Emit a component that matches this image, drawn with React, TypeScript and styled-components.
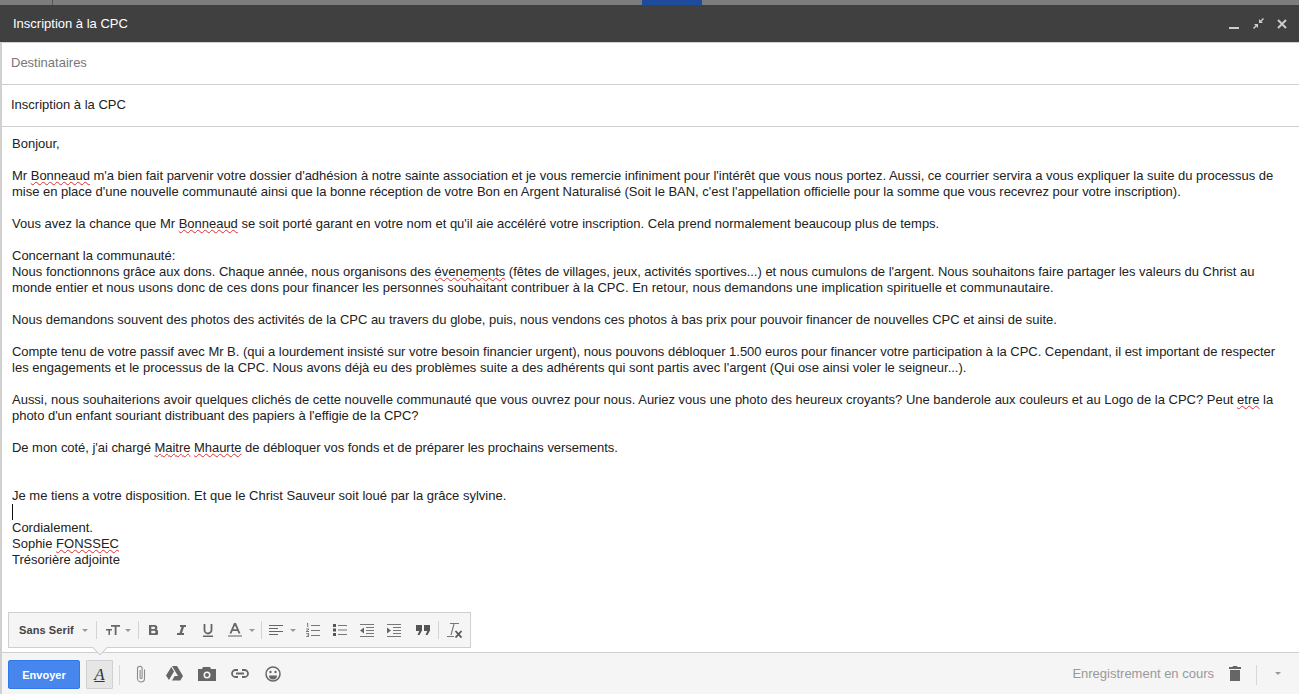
import React from 'react';
import styled, { createGlobalStyle } from 'styled-components';

const GlobalStyle = createGlobalStyle`
  html, body {
    margin: 0;
    padding: 0;
    background: #fff;
    overflow: hidden;
  }
  * {
    box-sizing: border-box;
  }
`;

const Page = styled.div`
  position: relative;
  width: 1299px;
  height: 694px;
  display: flex;
  flex-direction: column;
  overflow: hidden;
  font-family: 'Liberation Sans', Arial, sans-serif;
  color: #222;
`;

const BackdropStrip = styled.div`
  height: 5px;
  flex: none;
  display: flex;
  background: #7d7d7d;
`;

const BackdropTick = styled.div`
  width: 1px;
  margin-left: 52px;
  background: #555;
`;

const BackdropTab = styled.div`
  width: 60px;
  margin-left: 589px;
  background: #1f4b9c;
`;

const TitleBar = styled.div`
  height: 37px;
  flex: none;
  display: flex;
  align-items: center;
  padding: 0 5px 0 13px;
  background: #404040;
  color: #fff;
  font-size: 13px;
`;

const TitleText = styled.div`
  flex: 1;
`;

const WindowButton = styled.div`
  width: 24px;
  height: 16px;
  display: flex;
  align-items: center;
  justify-content: center;
`;

const Compose = styled.div`
  flex: 1;
  min-height: 0;
  display: flex;
  flex-direction: column;
  border-left: 2px solid #d0d0d0;
  border-top: 1px solid #d0d0d0;
`;

const FieldRow = styled.div<{ $muted?: boolean }>`
  height: 42px;
  flex: none;
  display: flex;
  align-items: center;
  padding: 0 0 2px 9px;
  border-bottom: 1px solid #cfcfcf;
  font-size: 13px;
  color: ${({ $muted }) => ($muted ? '#777' : '#222')};
`;

const MessageBody = styled.div`
  flex: 1;
  min-height: 0;
  padding: 9px 0 0 10px;
  font-size: 13px;
  line-height: 16px;
  color: #222;
`;

// $fit: small letter-spacing so the line ends where it does in the picture
const Line = styled.div<{ $fit?: number }>`
  height: 16px;
  white-space: nowrap;
  letter-spacing: ${({ $fit }) => $fit ?? 0}px;
`;

const Misspelt = styled.span`
  text-decoration: underline wavy #d83030 1px;
  text-underline-offset: 1px;
`;

const Caret = styled.div`
  width: 1px;
  height: 16px;
  background: #111;
`;

const FormatBar = styled.div`
  position: absolute;
  left: 8px;
  top: 612px;
  width: 463px;
  height: 36px;
  display: flex;
  align-items: center;
  padding-left: 10px;
  background: #f5f5f5;
  border: 1px solid #cfcfcf;
  z-index: 2;
`;

const FontLabel = styled.div`
  width: 55px;
  font-size: 11px;
  font-weight: 700;
  letter-spacing: 0.1px;
  color: #444;
  white-space: nowrap;
`;

const Slot = styled.div<{ $w: number; $start?: boolean }>`
  width: ${({ $w }) => $w}px;
  flex: none;
  height: 20px;
  display: flex;
  align-items: center;
  justify-content: ${({ $start }) => ($start ? 'flex-start' : 'center')};
`;

const BarSeparator = styled.div`
  width: 1px;
  height: 18px;
  flex: none;
  background: #d4d4d4;
`;

const BarArrow = styled.div`
  position: absolute;
  left: 92px;
  top: 647px;
  width: 15px;
  height: 8px;
  z-index: 3;
  overflow: hidden;

  &::after {
    content: '';
    position: absolute;
    left: 2px;
    top: -6px;
    width: 11px;
    height: 11px;
    background: #f5f5f5;
    border-right: 1px solid #cfcfcf;
    border-bottom: 1px solid #cfcfcf;
    transform: rotate(45deg);
  }
`;

const Footer = styled.div`
  height: 42px;
  flex: none;
  display: flex;
  align-items: center;
  padding: 0 0 0 6px;
  background: #f5f5f5;
  border-top: 1px solid #cfcfcf;
`;

const SendButton = styled.button`
  width: 72px;
  height: 29px;
  margin-top: 2px;
  padding: 0;
  border: 1px solid #3079ed;
  border-radius: 2px;
  background: #4787ed;
  color: #fff;
  font-family: inherit;
  font-size: 11px;
  font-weight: 700;
`;

const FormatToggle = styled.div`
  width: 27px;
  height: 29px;
  margin: 2px 0 0 6px;
  display: flex;
  align-items: center;
  justify-content: center;
  background: #e6e6e6;
  border: 1px solid #d0d0d0;
  border-radius: 1px;
  font-family: 'Liberation Serif', serif;
  font-style: italic;
  font-size: 17px;
  color: #333;
  text-decoration: underline;
`;

const FooterSeparator = styled.div<{ $ml: number; $mr?: number }>`
  width: 1px;
  height: 20px;
  flex: none;
  margin: 2px ${({ $mr }) => $mr ?? 0}px 0 ${({ $ml }) => $ml}px;
  background: #d8d8d8;
`;

const FooterIcon = styled.div<{ $w: number }>`
  width: ${({ $w }) => $w}px;
  height: 24px;
  flex: none;
  display: flex;
  align-items: center;
  justify-content: center;
`;

const SaveStatus = styled.div`
  margin-left: auto;
  font-size: 13px;
  color: #999;
  white-space: nowrap;
`;

const Chevron = () => (
  <svg width="6" height="3" viewBox="0 0 6 3">
    <path d="M0 0h6L3 3z" fill="#999" />
  </svg>
);

const App: React.FC = () => {
  return (
    <Page>
      <GlobalStyle />
      <BackdropStrip>
        <BackdropTick />
        <BackdropTab />
      </BackdropStrip>
      <TitleBar>
        <TitleText>Inscription à la CPC</TitleText>
        <WindowButton>
          <svg width="10" height="10" viewBox="0 0 10 10">
            <path d="M0 8h10v2H0z" fill="#ccc" />
          </svg>
        </WindowButton>
        <WindowButton>
          <svg width="11" height="11" viewBox="0 0 11 11">
            <path d="M6 5V1l1.500 1.500L10 0l1 1-2.500 2.500L10 5zM5 6v4L3.500 8.500 1 11l-1-1 2.500-2.500L1 6z" fill="#ccc" />
          </svg>
        </WindowButton>
        <WindowButton>
          <svg width="10" height="10" viewBox="0 0 10 10">
            <path d="M1 1l8 8M9 1l-8 8" stroke="#ccc" strokeWidth="2" />
          </svg>
        </WindowButton>
      </TitleBar>
      <Compose>
        <FieldRow $muted>Destinataires</FieldRow>
        <FieldRow>Inscription à la CPC</FieldRow>
        <MessageBody>
          <Line>Bonjour,</Line>
          <Line />
          <Line $fit={-0.013}>
            Mr <Misspelt>Bonneaud</Misspelt> m'a bien fait parvenir votre dossier d'adhésion à notre sainte association et je vous remercie infiniment pour l'intérêt que vous nous portez. Aussi, ce courrier servira a vous expliquer la suite du processus de
          </Line>
          <Line $fit={-0.02}>
            mise en place d'une nouvelle communauté ainsi que la bonne réception de votre Bon en Argent Naturalisé (Soit le BAN, c'est l'appellation officielle pour la somme que vous recevrez pour votre inscription).
          </Line>
          <Line />
          <Line $fit={-0.011}>
            Vous avez la chance que Mr <Misspelt>Bonneaud</Misspelt> se soit porté garant en votre nom et qu'il aie accéléré votre inscription. Cela prend normalement beaucoup plus de temps.
          </Line>
          <Line />
          <Line>Concernant la communauté:</Line>
          <Line $fit={-0.014}>
            Nous fonctionnons grâce aux dons. Chaque année, nous organisons des <Misspelt>évenements</Misspelt> (fêtes de villages, jeux, activités sportives...) et nous cumulons de l'argent. Nous souhaitons faire partager les valeurs du Christ au
          </Line>
          <Line $fit={0.022}>
            monde entier et nous usons donc de ces dons pour financer les personnes souhaitant contribuer à la CPC. En retour, nous demandons une implication spirituelle et communautaire.
          </Line>
          <Line />
          <Line $fit={-0.017}>
            Nous demandons souvent des photos des activités de la CPC au travers du globe, puis, nous vendons ces photos à bas prix pour pouvoir financer de nouvelles CPC et ainsi de suite.
          </Line>
          <Line />
          <Line $fit={-0.027}>
            Compte tenu de votre passif avec Mr B. (qui a lourdement insisté sur votre besoin financier urgent), nous pouvons débloquer 1.500 euros pour financer votre participation à la CPC. Cependant, il est important de respecter
          </Line>
          <Line $fit={0.006}>
            les engagements et le processus de la CPC. Nous avons déjà eu des problèmes suite a des adhérents qui sont partis avec l'argent (Qui ose ainsi voler le seigneur...).
          </Line>
          <Line />
          <Line $fit={-0.01}>
            Aussi, nous souhaiterions avoir quelques clichés de cette nouvelle communauté que vous ouvrez pour nous. Auriez vous une photo des heureux croyants? Une banderole aux couleurs et au Logo de la CPC? Peut <Misspelt>etre</Misspelt> la
          </Line>
          <Line $fit={-0.03}>
            photo d'un enfant souriant distribuant des papiers à l'effigie de la CPC?
          </Line>
          <Line />
          <Line $fit={-0.036}>
            De mon coté, j'ai chargé <Misspelt>Maitre</Misspelt> <Misspelt>Mhaurte</Misspelt> de débloquer vos fonds et de préparer les prochains versements.
          </Line>
          <Line />
          <Line />
          <Line>Je me tiens a votre disposition. Et que le Christ Sauveur soit loué par la grâce sylvine.</Line>
          <Caret />
          <Line>Cordialement.</Line>
          <Line>
            Sophie <Misspelt>FONSSEC</Misspelt>
          </Line>
          <Line>Trésorière adjointe</Line>
        </MessageBody>
        <Footer>
          <SendButton>Envoyer</SendButton>
          <FormatToggle>A</FormatToggle>
          <FooterSeparator $ml={6} />
          <FooterIcon $w={42}>
            <svg width="10" height="18" viewBox="0 0 10 18">
              <path d="M8.500 4.500v9a3.500 3.500 0 0 1-7 0V3.500a2.300 2.300 0 0 1 4.600 0v9a1 1 0 0 1-2 0V5" fill="none" stroke="#8a8a8a" strokeWidth="1.100" />
            </svg>
          </FooterIcon>
          <FooterIcon $w={24}>
            <svg width="17" height="15" viewBox="0 0 17 15">
              <path d="M6 0h5l6 10h-5zM5.300 1L8 5.500 3 14 0 9.500zM6 14.500l2.700-4.500H17l-2.700 4.500z" fill="#666" />
            </svg>
          </FooterIcon>
          <FooterIcon $w={42}>
            <svg width="18" height="14" viewBox="0 0 18 14">
              <path fillRule="evenodd" d="M0 2h4l1-2h7l1 2h5v12H0zM9 4.500a3.500 3.500 0 1 0 0 7 3.500 3.500 0 0 0 0-7zM9 6a2 2 0 1 1 0 4 2 2 0 0 1 0-4z" fill="#666" />
            </svg>
          </FooterIcon>
          <FooterIcon $w={24}>
            <svg width="18" height="9" viewBox="0 0 18 9">
              <path d="M7 1H4.500a3.500 3.500 0 0 0 0 7H7M11 1h2.500a3.500 3.500 0 0 1 0 7H11M5 4.500h8" fill="none" stroke="#666" strokeWidth="1.800" />
            </svg>
          </FooterIcon>
          <FooterIcon $w={42}>
            <svg width="16" height="16" viewBox="0 0 16 16">
              <circle cx="8" cy="8" r="7" fill="none" stroke="#666" strokeWidth="1.500" />
              <circle cx="5.500" cy="6" r="1.200" fill="#666" />
              <circle cx="10.500" cy="6" r="1.200" fill="#666" />
              <path d="M4 9.500h8a4 4 0 0 1-8 0z" fill="#666" />
            </svg>
          </FooterIcon>
          <SaveStatus>Enregistrement en cours</SaveStatus>
          <FooterIcon $w={42}>
            <svg width="12" height="15" viewBox="0 0 12 15">
              <path d="M4 0h4l.5 1H12v2H0V1h3.500zM1 4h10v11H1z" fill="#666" />
            </svg>
          </FooterIcon>
          <FooterSeparator $ml={0} />
          <FooterIcon $w={42}>
            <Chevron />
          </FooterIcon>
        </Footer>
      </Compose>
      <FormatBar>
        <FontLabel>Sans Serif</FontLabel>
        <Slot $w={22}><Chevron /></Slot>
        <BarSeparator />
        <Slot $w={28} $start>
          <svg width="23" height="10" viewBox="-9 0 23 10">
            <path d="M0 4h6v1.500H4V10H2.500V5.500H0zM5 0h9v1.700h-3.500V10H8.700V1.700H5z" fill="#666" />
          </svg>
        </Slot>
        <Slot $w={13} $start><Chevron /></Slot>
        <BarSeparator />
        <Slot $w={29}>
          <svg width="9" height="10" viewBox="0 0 9 10">
            <path fillRule="evenodd" d="M0 0h5.500a2.600 2.600 0 0 1 2 4.500A2.800 2.800 0 0 1 5.700 10H0zM2.300 1.800v2.200h2.700a1.100 1.100 0 0 0 0-2.200zM2.300 5.800v2.400h3a1.200 1.200 0 0 0 0-2.400z" fill="#666" />
          </svg>
        </Slot>
        <Slot $w={27}>
          <svg width="9" height="10" viewBox="0 0 9 10">
            <path d="M3 0h6v2H7L5 8h2v2H0V8h2.500l2-6H3z" fill="#666" />
          </svg>
        </Slot>
        <Slot $w={27}>
          <svg width="10" height="13" viewBox="0 0 10 13">
            <path d="M1.500 0v6a3.500 3.500 0 0 0 7 0V0" fill="none" stroke="#666" strokeWidth="1.800" />
            <path d="M0 11.500h10V13H0z" fill="#666" />
          </svg>
        </Slot>
        <Slot $w={27}>
          <svg width="14" height="14" viewBox="0 0 14 14">
            <path fillRule="evenodd" d="M6 0h2l4.500 10.500h-2L9.500 8h-5l-1 2.500h-2zM7 2.500L5.200 6.300h3.600z" fill="#666" />
            <path d="M0 12h14v2H0z" fill="#aaa" />
          </svg>
        </Slot>
        <Slot $w={12} $start><Chevron /></Slot>
        <BarSeparator />
        <Slot $w={28}>
          <svg width="14" height="11" viewBox="0 0 14 11">
            <path d="M0 .5h14M0 3.500h9M0 6.500h14M0 9.500h9" fill="none" stroke="#666" strokeWidth="1" />
          </svg>
        </Slot>
        <Slot $w={10} $start><Chevron /></Slot>
        <Slot $w={27}>
          <svg width="14" height="14" viewBox="0 0 14 14">
            <path d="M5 2.500h9M5 7.500h9M5 12.500h9" stroke="#777" strokeWidth="1" />
            <path d="M1 0h1.200v4H1.200V1H1zM0 5.500h3v1.200L1.200 8H3v1H0V8l1.800-1.200V6.300H0zM0 10h3v4H0v-.8h2.200v-.8H1v-.7h1.200v-.9H0z" fill="#777" />
          </svg>
        </Slot>
        <Slot $w={27}>
          <svg width="14" height="14" viewBox="0 0 14 14">
            <path d="M0 1h3v3H0zM0 5.500h3v3H0zM0 10h3v3H0z" fill="#555" />
            <path d="M5 2.500h9M5 7h9M5 11.500h9" stroke="#777" strokeWidth="1" />
          </svg>
        </Slot>
        <Slot $w={27}>
          <svg width="14" height="13" viewBox="0 0 14 13">
            <path d="M0 .5h14M6 3.500h8M6 6.500h8M6 9.500h8M0 12.500h14" stroke="#777" strokeWidth="1" />
            <path d="M4 3.500v6L0 6.500z" fill="#666" />
          </svg>
        </Slot>
        <Slot $w={27}>
          <svg width="14" height="13" viewBox="0 0 14 13">
            <path d="M0 .5h14M6 3.500h8M6 6.500h8M6 9.500h8M0 12.500h14" stroke="#777" strokeWidth="1" />
            <path d="M0 3.500v6l4-3z" fill="#666" />
          </svg>
        </Slot>
        <Slot $w={30}>
          <svg width="14" height="10" viewBox="0 0 14 10">
            <path d="M0 0h6v5.500L3.500 10H1.500l1.800-4H0zM8 0h6v5.500L11.500 10h-2l1.800-4H8z" fill="#555" />
          </svg>
        </Slot>
        <BarSeparator />
        <Slot $w={32}>
          <svg width="16" height="15" viewBox="0 0 16 15">
            <path d="M3 .5h9M7 1L4 12M0 13.500h7" fill="none" stroke="#777" strokeWidth="1.100" />
            <path d="M8.500 8l6 6.500M14.500 8l-6 6.500" fill="none" stroke="#555" strokeWidth="1.800" />
          </svg>
        </Slot>
      </FormatBar>
      <BarArrow />
    </Page>
  );
};

export default App;
